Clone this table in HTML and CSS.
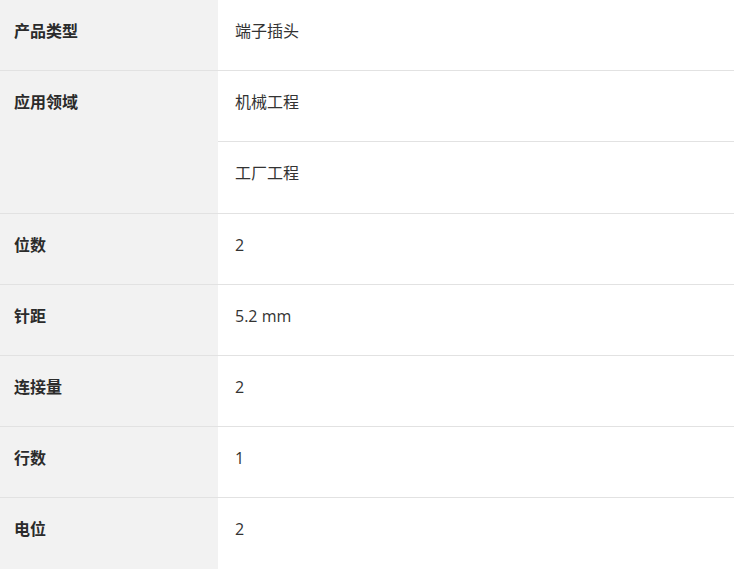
FILE: index.html
```html
<!DOCTYPE html>
<html lang="zh">
<head>
<meta charset="utf-8">
<link rel="stylesheet" href="styles.css">
</head>
<body>
<table class="spec">
  <tbody>
    <tr class="first"><th>产品类型</th><td>端子插头</td></tr>
    <tr><th rowspan="2">应用领域</th><td>机械工程</td></tr>
    <tr class="tall"><td>工厂工程</td></tr>
    <tr><th>位数</th><td>2</td></tr>
    <tr><th>针距</th><td>5.2 mm</td></tr>
    <tr><th>连接量</th><td>2</td></tr>
    <tr><th>行数</th><td>1</td></tr>
    <tr class="last"><th>电位</th><td>2</td></tr>
  </tbody>
</table>
</body>
</html>
```
FILE: styles.css
```css
html, body {
  margin: 0;
  padding: 0;
  background: #ffffff;
}
.spec {
  width: 734px;
  border-collapse: collapse;
  font-family: "Open Sans", "Noto Sans CJK SC", sans-serif;
  font-size: 16px;
  color: #333333;
}
.spec tr {
  border-top: 1px solid #e2e2e2;
}
.spec tr.first {
  border-top: none;
}
.spec th,
.spec td {
  height: 71px;
  box-sizing: border-box;
  vertical-align: top;
  text-align: left;
  padding: 20px 14px 0;
  line-height: 22px;
}
.spec tr.first th,
.spec tr.first td {
  height: 70px;
}
.spec tr.tall td {
  height: 72px;
}
.spec tr.last th,
.spec tr.last td {
  height: 72px;
}
.spec th {
  width: 218px;
  background: #f2f2f2;
  font-weight: 700;
  color: #2b2b2b;
}
.spec td {
  padding-left: 17px;
  font-weight: 400;
}
```
